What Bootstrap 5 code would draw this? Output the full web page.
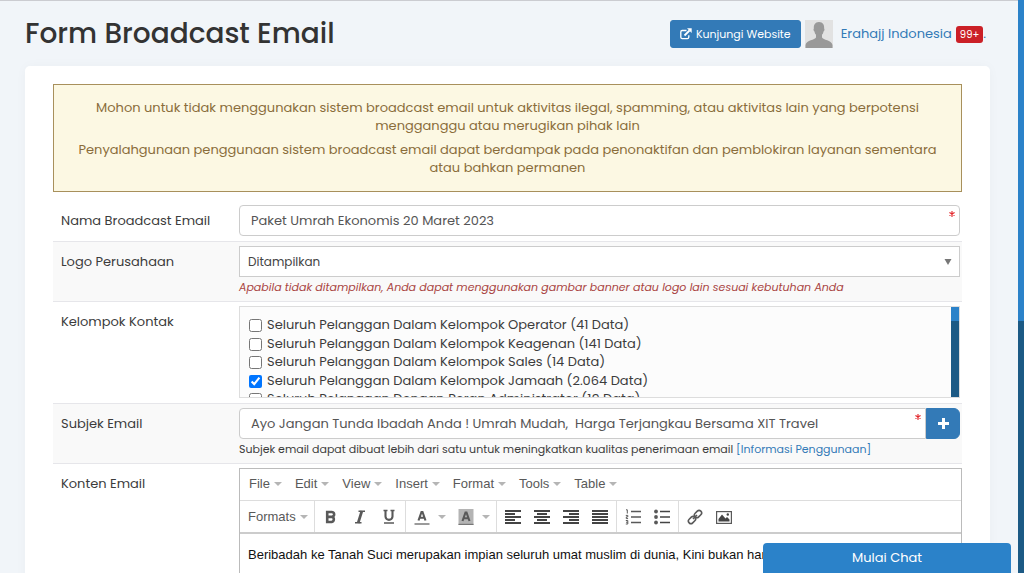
<!DOCTYPE html>
<html lang="id">
<head>
<meta charset="utf-8">
<meta name="viewport" content="width=device-width, initial-scale=1">
<title>Form Broadcast Email</title>
<link href="https://cdn.jsdelivr.net/npm/bootstrap@5.3.0/dist/css/bootstrap.min.css" rel="stylesheet">
<style>
:root { --brand: #337ab7; --field-line: #ccc; }
html { scrollbar-width: none; }
body { background: #f1f5f9; color: #3c3c3c; font-family: Poppins, Inter, sans-serif; font-size: 13px; line-height: 18px; border-top: 1px solid #cbccd1; }
a { color: var(--brand); text-decoration: none; }
.page { padding: 18px 34px 0 25px; }
.page-title { font-size: 28px; line-height: 30px; font-weight: 500; color: #333; }
.btn-brand { --bs-btn-bg: #337ab7; --bs-btn-border-color: #337ab7; --bs-btn-color: #fff; --bs-btn-hover-bg: #286090; --bs-btn-hover-color: #fff; }
.btn-visit { font-size: 11px; line-height: 18px; padding: 4px 9px; border-radius: 3px; }
.avatar { width: 28px; height: 28px; }
.account { padding-right: 4px; }
.user-link { font-size: 13px; }
.count { background: #cb2027; font-size: 10px; line-height: 17px; padding: 0 4px; border-radius: 3px; font-weight: 400; }
.panel { margin-top: 17px; padding: 18px 28px; border-radius: 5px; box-shadow: 0 0 12px rgba(0,0,0,.03); }
.notice { background: #fcf8e3; border: 1px solid #a8905c; color: #8a6d3b; padding: 14px 16px; line-height: 18px; margin-bottom: 9px; }
.notice p { margin-bottom: 6px; }
.notice p:last-child { margin-bottom: 0; }
.form-line { padding: 4px 2px 5px 8px; border-top: 1px solid #e6e6ea; }
.form-line:first-child { border-top: 0; }
.form-line:nth-child(even) { background: #f9f9f9; }
.form-line:last-child { padding-right: 0; }
.line-label { width: 178px; flex: none; padding-top: 7px; }
.field { height: 31px; font-size: 13px; color: #555; border-color: var(--field-line); padding: 4px 11px; border-radius: 4px; }
.field-select { height: 31px; border-radius: 0; padding: 4px 8px; font-size: 12px; color: #444; background-position: right 7px center; background-size: 8px 6px; background-image: url("data:image/svg+xml,%3csvg xmlns='http://www.w3.org/2000/svg' viewBox='0 0 8 6'%3e%3cpath d='M.5 0h7L4 6z' fill='%23777'/%3e%3c/svg%3e"); }
.required-mark { top: 6px; right: 5px; width: 6px; height: 6px; z-index: 6; }
.btn-add { width: 34px; padding: 0; }
.hint { font-size: 11px; line-height: 18px; margin-top: 1px; }
.hint-warn { color: #a94442; font-style: italic; }
.contact-box { height: 92px; border: 1px solid #ddd; background: #fcfcfc; }
.contact-list { padding: 9px; overflow: auto; scrollbar-width: none; }
.contact-list label { display: flex; align-items: center; gap: 5px; line-height: 18px; }
.contact-list label:nth-child(even) { margin-top: 1px; }
.contact-list input { width: 13px; height: 13px; margin: 0; }
.track { background: #1c5a85; }
.track-thumb { background: #2b82c9; }
.list-track { width: 8px; }
.page-track { width: 6px; }
.editor { border: 1px solid #bbb; font-family: "Liberation Sans", Arial, sans-serif; font-size: 13px; line-height: 18px; color: #595959; }
.editor button { border: 0; background: none; padding: 0; color: inherit; display: flex; align-items: center; }
.editor .caret::after { content: ""; border: 4px solid transparent; border-top-color: #b5b5b5; border-bottom: 0; margin-left: 4px; }
.menus { gap: 13px; padding: 6px 9px 7px; border-bottom: 1px solid #ddd; }
.tools { border-bottom: 2px solid #ccc; }
.tool-group { height: 31px; padding: 0 8px; gap: 13px; border-left: 1px solid #ddd; }
.tool-group:first-child { border-left: 0; padding: 0 6px 0 8px; }
.tool-group svg { width: 16px; height: 16px; }
.color-tools { gap: 12px; padding-right: 6px; }
.writing { padding: 12px 8px; color: #111; height: 110px; overflow: hidden; }
.btn-chat { right: 13px; width: 248px; height: 30px; background: #2b82c9; color: #fff; border: 0; border-radius: 4px 4px 0 0; font-size: 13px; line-height: 18px; z-index: 20; }
</style>
</head>
<body>
<div class="page">
  <header class="d-flex justify-content-between align-items-center">
    <h1 class="page-title mb-0">Form Broadcast Email</h1>
    <div class="account d-flex align-items-center">
      <button type="button" class="btn btn-brand btn-visit d-flex align-items-center">
        <svg width="12" height="12" viewBox="0 0 12 12" fill="none" stroke="#fff" stroke-width="1.3" class="me-1"><path d="M6.500 2.500H2.200A1.500 1.500 0 0 0 .8 4v5.200a1.500 1.500 0 0 0 1.400 1.400h5.200A1.500 1.500 0 0 0 8.800 9.200V7.200"/><path d="M4.500 7.500L9.500 2.500" stroke-width="1.800"/><path d="M7 .3h4.700V5z" fill="#fff" stroke="none"/></svg>Kunjungi Website</button>
      <svg class="avatar ms-1" viewBox="0 0 28 28" role="img" aria-label="Foto profil"><rect width="28" height="28" fill="#e2e2e2"/><path d="M14 2c4 0 5.500 3 5.100 6.500.8.500.3 2.500-.6 3-.3 1.800-1 2.800-1.500 3.300v2.700c1 2.500 9.500 2.500 10.500 7.500V28H.5v-3c1-5 9.500-5 10.500-7.500v-2.700c-.5-.5-1.200-1.500-1.500-3.300-.9-.5-1.400-2.500-.6-3C8.500 5 10 2 14 2z" fill="#999"/></svg>
      <a href="#" class="user-link d-flex align-items-center ms-2">Erahajj Indonesia <span class="badge count ms-1">99+</span>.</a>
    </div>
  </header>

  <main class="panel bg-white">
    <div class="notice text-center">
      <p>Mohon untuk tidak menggunakan sistem broadcast email untuk aktivitas ilegal, spamming, atau aktivitas lain yang berpotensi mengganggu atau merugikan pihak lain</p>
      <p>Penyalahgunaan penggunaan sistem broadcast email dapat berdampak pada penonaktifan dan pemblokiran layanan sementara atau bahkan permanen</p>
    </div>

    <form>
      <div class="form-line d-flex">
        <label class="line-label" for="nama">Nama Broadcast Email</label>
        <div class="flex-grow-1 position-relative">
          <input id="nama" class="form-control field" type="text" value="Paket Umrah Ekonomis 20 Maret 2023" required>
          <svg class="required-mark position-absolute" viewBox="0 0 7 7" aria-hidden="true"><path d="M3.500 0v7M.5 1.800l6 3.400M6.500 1.800l-6 3.400" stroke="#e3262b" stroke-width="1.300"/></svg>
        </div>
      </div>
      <div class="form-line d-flex">
        <label class="line-label" for="logo">Logo Perusahaan</label>
        <div class="flex-grow-1">
          <select id="logo" class="form-select field field-select"><option>Ditampilkan</option><option>Tidak Ditampilkan</option></select>
          <div class="hint hint-warn">Apabila tidak ditampilkan, Anda dapat menggunakan gambar banner atau logo lain sesuai kebutuhan Anda</div>
        </div>
      </div>
      <div class="form-line d-flex" role="group" aria-labelledby="kontak">
        <span class="line-label" id="kontak">Kelompok Kontak</span>
        <div class="contact-box d-flex flex-grow-1">
          <div class="contact-list flex-grow-1">
            <label><input type="checkbox">Seluruh Pelanggan Dalam Kelompok Operator (41 Data)</label>
            <label><input type="checkbox">Seluruh Pelanggan Dalam Kelompok Keagenan (141 Data)</label>
            <label><input type="checkbox">Seluruh Pelanggan Dalam Kelompok Sales (14 Data)</label>
            <label><input type="checkbox" checked>Seluruh Pelanggan Dalam Kelompok Jamaah (2.064 Data)</label>
            <label><input type="checkbox">Seluruh Pelanggan Dengan Peran Administrator (19 Data)</label>
          </div>
          <div class="track list-track"><div class="track-thumb" style="height:15%"></div></div>
        </div>
      </div>
      <div class="form-line d-flex">
        <label class="line-label" for="subjek">Subjek Email</label>
        <div class="flex-grow-1">
          <div class="d-flex">
            <div class="flex-grow-1 position-relative">
              <input id="subjek" class="form-control field rounded-end-0" type="text" value="Ayo Jangan Tunda Ibadah Anda ! Umrah Mudah,  Harga Terjangkau Bersama XIT Travel" required>
              <svg class="required-mark position-absolute" viewBox="0 0 7 7" aria-hidden="true"><path d="M3.500 0v7M.5 1.800l6 3.400M6.500 1.800l-6 3.400" stroke="#e3262b" stroke-width="1.300"/></svg>
            </div>
            <button type="button" class="btn btn-brand btn-add rounded-start-0" aria-label="Tambah subjek"><svg width="11" height="11" viewBox="0 0 11 11" class="d-block mx-auto"><path d="M5.500 0v11M0 5.500h11" stroke="#fff" stroke-width="3"/></svg></button>
          </div>
          <div class="hint">Subjek email dapat dibuat lebih dari satu untuk meningkatkan kualitas penerimaan email <a href="#">[Informasi Penggunaan]</a></div>
        </div>
      </div>
      <div class="form-line d-flex">
        <span class="line-label">Konten Email</span>
        <div class="editor flex-grow-1">
          <div class="menus d-flex">
            <button type="button" class="caret">File</button><button type="button" class="caret">Edit</button><button type="button" class="caret">View</button><button type="button" class="caret">Insert</button><button type="button" class="caret">Format</button><button type="button" class="caret">Tools</button><button type="button" class="caret">Table</button>
          </div>
          <div class="tools d-flex">
            <div class="tool-group d-flex"><button type="button" class="caret">Formats</button></div>
            <div class="tool-group d-flex">
              <button type="button" aria-label="Tebal"><svg viewBox="0 0 16 16"><path d="M4.200 3h4.300a2.400 2.400 0 0 1 .5 4.800A2.700 2.700 0 0 1 8.700 13H4.200z M5 7.900h4" fill="none" stroke="#595959" stroke-width="2.600"/></svg></button>
              <button type="button" aria-label="Miring"><svg viewBox="0 0 16 16"><path d="M6.500 2.200H13M3 13.800h6.500" stroke="#595959" stroke-width="1.400"/><path d="M9.900 2l-3.800 12" stroke="#595959" stroke-width="2.700"/></svg></button>
              <button type="button" aria-label="Garis bawah"><svg viewBox="0 0 16 16"><path d="M4.500 1.500v6c0 4.500 7 4.500 7 0v-6" fill="none" stroke="#595959" stroke-width="2.100"/><path d="M2.500 1.500h4M9.500 1.500h4M3 14h10" stroke="#595959" stroke-width="1.500"/></svg></button>
            </div>
            <div class="tool-group color-tools d-flex">
              <button type="button" class="caret" aria-label="Warna teks"><svg viewBox="0 0 16 16" class="me-1"><path d="M4.500 11.500L7.500 3h1l3 8.500M5.500 8.700h5" fill="none" stroke="#595959" stroke-width="2.100"/><path d="M.5 15h15" stroke="#595959" stroke-width="1.200"/></svg></button>
              <button type="button" class="caret" aria-label="Warna latar"><svg viewBox="0 0 16 16" class="me-1"><path d="M.5 0h15v16H.5z" fill="#b4b4b4"/><path d="M4.500 12L7.500 3.500h1l3 8.500M5.500 9.200h5" fill="none" stroke="#595959" stroke-width="2.100"/><path d="M.5 15.400h15" stroke="#777" stroke-width="1.200"/></svg></button>
            </div>
            <div class="tool-group d-flex">
              <button type="button" aria-label="Rata kiri"><svg viewBox="0 0 16 16"><path d="M0 2h16M0 5h10M0 8h16M0 11h10M0 14h16" stroke="#444" stroke-width="1.800"/></svg></button>
              <button type="button" aria-label="Rata tengah"><svg viewBox="0 0 16 16"><path d="M0 2h16M3 5h10M0 8h16M3 11h10M0 14h16" stroke="#444" stroke-width="1.800"/></svg></button>
              <button type="button" aria-label="Rata kanan"><svg viewBox="0 0 16 16"><path d="M0 2h16M6 5h10M0 8h16M6 11h10M0 14h16" stroke="#444" stroke-width="1.800"/></svg></button>
              <button type="button" aria-label="Rata penuh"><svg viewBox="0 0 16 16"><path d="M0 2h16M0 5h16M0 8h16M0 11h16M0 14h16" stroke="#444" stroke-width="1.800"/></svg></button>
            </div>
            <div class="tool-group d-flex">
              <button type="button" aria-label="Daftar bernomor"><svg viewBox="0 0 16 16" fill="none" stroke="#595959"><path d="M6 2.500h10M6 8h10M6 13.500h10" stroke-width="1.700"/><path d="M1 .8h1.300v3.700M.8 6.400h2v1.500H1.300v1.700h1.800M.8 11.500h2v3.500h-2M1 13.200h1.800" stroke-width="1"/></svg></button>
              <button type="button" aria-label="Daftar berbutir"><svg viewBox="0 0 16 16"><path d="M6 2.500h10M6 8h10M6 13.500h10" stroke="#444" stroke-width="1.700"/><g fill="#595959"><circle cx="2" cy="2.500" r="1.900"/><circle cx="2" cy="8" r="1.900"/><circle cx="2" cy="13.500" r="1.900"/></g></svg></button>
            </div>
            <div class="tool-group d-flex">
              <button type="button" aria-label="Tautan"><svg viewBox="0 0 16 16" fill="none" stroke="#595959" stroke-width="1.600"><rect x="-4" y="-2.500" width="8" height="5" rx="2.500" transform="translate(11 5) rotate(-45)"/><rect x="-4" y="-2.500" width="8" height="5" rx="2.500" transform="translate(5 11) rotate(-45)"/><path d="M6 10l4-4"/></svg></button>
              <button type="button" aria-label="Gambar"><svg viewBox="0 0 16 16"><rect x=".6" y="2.600" width="14.800" height="11.800" fill="none" stroke="#595959" stroke-width="1.200"/><path d="M2.500 12.500V10l3.500-4.500 3.500 4 1.500-1.500 2.500 2.500v2z" fill="#444"/><circle cx="11.800" cy="5.500" r="1.200" fill="#444"/></svg></button>
            </div>
          </div>
          <div class="writing" contenteditable="true" role="textbox" aria-label="Konten Email">Beribadah ke Tanah Suci merupakan impian seluruh umat muslim di dunia, Kini bukan hanya</div>
        </div>
      </div>
    </form>
  </main>
</div>
<div class="page-track track position-fixed top-0 end-0 h-100"><div class="track-thumb" style="height:56%"></div></div>
<button type="button" class="btn-chat position-fixed bottom-0">Mulai Chat</button>
<script src="https://cdn.jsdelivr.net/npm/bootstrap@5.3.0/dist/js/bootstrap.bundle.min.js"></script>
</body>
</html>
